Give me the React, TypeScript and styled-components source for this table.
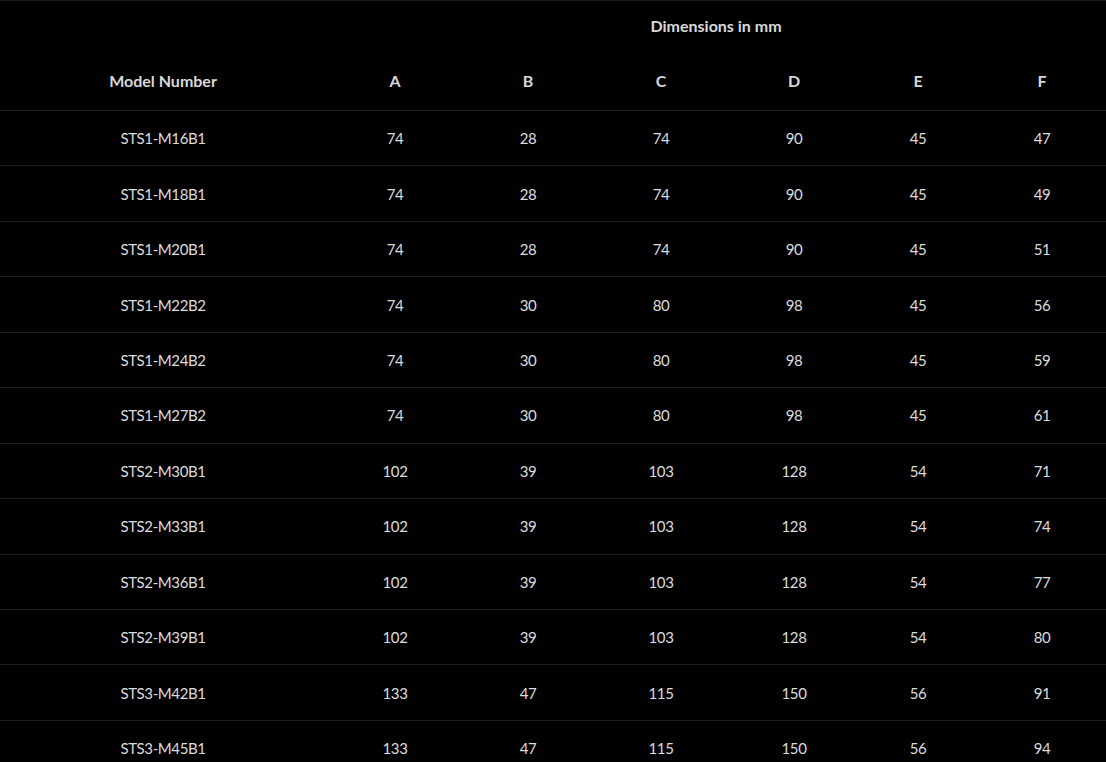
import React from "react";
import styled, { createGlobalStyle } from "styled-components";

const Global = createGlobalStyle`
  html, body { margin: 0; padding: 0; background: #000; }
  body { font-family: "Lato", "Liberation Sans", sans-serif; color: #dcdcdc; }
`;

const Table = styled.table`
  width: 1106px;
  border-collapse: collapse;
  table-layout: fixed;
  border-top: 1px solid #161a20;
  background: #000;
`;

const HeadCell = styled.th`
  height: 55px;
  padding: 0 0 5px;
  box-sizing: border-box;
  font-size: 16px;
  font-weight: 700;
  color: #d8d8d8;
  text-align: center;
  vertical-align: middle;
`;

const HeadRow = styled.tr<{ $last?: boolean }>`
  border-bottom: ${(p) => (p.$last ? "1px solid #1e1e1e" : "none")};
`;

const BodyRow = styled.tr`
  border-bottom: 1px solid #1e1e1e;
`;

const Cell = styled.td`
  height: 54.45px;
  padding: 0;
  font-size: 15px;
  font-weight: 400;
  letter-spacing: -0.4px;
  color: #dcdcdc;
  text-align: center;
  vertical-align: middle;
`;

const widths = [326, 138, 128, 138, 128, 120, 128];

const rows: (string | number)[][] = [
  ["STS1-M16B1", 74, 28, 74, 90, 45, 47],
  ["STS1-M18B1", 74, 28, 74, 90, 45, 49],
  ["STS1-M20B1", 74, 28, 74, 90, 45, 51],
  ["STS1-M22B2", 74, 30, 80, 98, 45, 56],
  ["STS1-M24B2", 74, 30, 80, 98, 45, 59],
  ["STS1-M27B2", 74, 30, 80, 98, 45, 61],
  ["STS2-M30B1", 102, 39, 103, 128, 54, 71],
  ["STS2-M33B1", 102, 39, 103, 128, 54, 74],
  ["STS2-M36B1", 102, 39, 103, 128, 54, 77],
  ["STS2-M39B1", 102, 39, 103, 128, 54, 80],
  ["STS3-M42B1", 133, 47, 115, 150, 56, 91],
  ["STS3-M45B1", 133, 47, 115, 150, 56, 94],
];

export default function App() {
  return (
    <>
      <Global />
      <Table>
        <colgroup>
          {widths.map((w, i) => (
            <col key={i} style={{ width: w }} />
          ))}
        </colgroup>
        <thead>
          <HeadRow>
            <HeadCell />
            <HeadCell colSpan={6}>Dimensions in mm</HeadCell>
          </HeadRow>
          <HeadRow $last>
            <HeadCell>Model Number</HeadCell>
            {["A", "B", "C", "D", "E", "F"].map((h) => (
              <HeadCell key={h}>{h}</HeadCell>
            ))}
          </HeadRow>
        </thead>
        <tbody>
          {rows.map((r) => (
            <BodyRow key={r[0] as string}>
              {r.map((v, i) => (
                <Cell key={i}>{v}</Cell>
              ))}
            </BodyRow>
          ))}
        </tbody>
      </Table>
    </>
  );
}
